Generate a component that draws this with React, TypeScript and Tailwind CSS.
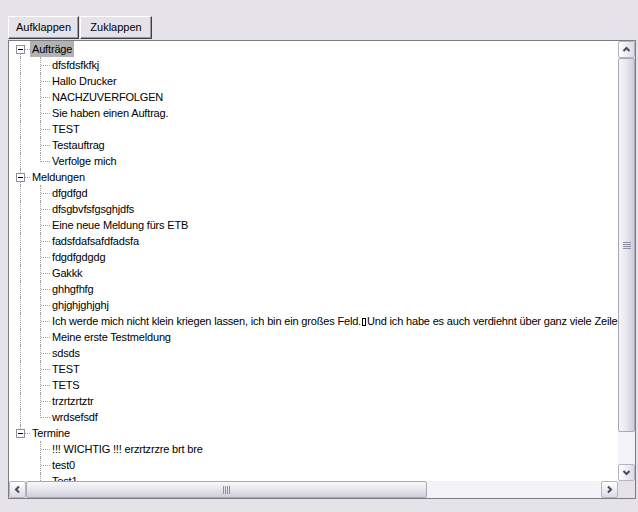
import type { ReactNode } from "react";

type Group = { title: string; items: ReactNode[]; selected?: boolean };

const groups: Group[] = [
  {
    title: "Aufträge",
    selected: true,
    items: ["dfsfdsfkfkj", "Hallo Drucker", "NACHZUVERFOLGEN", "Sie haben einen Auftrag.", "TEST", "Testauftrag", "Verfolge mich"],
  },
  {
    title: "Meldungen",
    items: [
      "dfgdfgd",
      "dfsgbvfsfgsghjdfs",
      "Eine neue Meldung fürs ETB",
      "fadsfdafsafdfadsfa",
      "fdgdfgdgdg",
      "Gakkk",
      "ghhgfhfg",
      "ghjghjghjghj",
      <>
        Ich werde mich nicht klein kriegen lassen, ich bin ein großes Feld.
        <span className="mx-[1px] inline-block h-[8px] w-[4px] border border-black align-[-1px]" />
        Und ich habe es auch verdiehnt über ganz viele Zeile
      </>,
      "Meine erste Testmeldung",
      "sdsds",
      "TEST",
      "TETS",
      "trzrtzrtztr",
      "wrdsefsdf",
    ],
  },
  {
    title: "Termine",
    items: ["!!! WICHTIG !!! erzrtzrzre brt bre", "test0", "Test1", "Test2"],
  },
];

const dot = "border-dotted border-[#a0a0a0]";

function RootRow({ title, first, last, selected }: { title: string; first: boolean; last: boolean; selected?: boolean }) {
  return (
    <div className="relative flex h-4 items-center pl-[21px] leading-4 whitespace-nowrap">
      {!first && <span className={`absolute left-[11px] top-0 h-[4px] border-l ${dot}`} />}
      {!last && <span className={`absolute left-[11px] top-[13px] bottom-0 border-l ${dot}`} />}
      <span className="absolute left-[7px] top-[4px] flex h-[9px] w-[9px] items-center justify-center border border-[#8e8e9e] bg-white">
        <span className="h-px w-[5px] bg-black" />
      </span>
      <span className={`absolute left-[16px] top-[8px] w-[5px] border-t ${dot}`} />
      <span className={`h-4 px-[2px] ${selected ? "bg-[#b2b2b2]" : ""}`}>{title}</span>
    </div>
  );
}

function ChildRow({ text, rootLast, lastChild }: { text: ReactNode; rootLast: boolean; lastChild: boolean }) {
  return (
    <div className="relative h-4 pl-[43px] leading-4 whitespace-nowrap">
      {!rootLast && <span className={`absolute left-[11px] top-0 bottom-0 border-l ${dot}`} />}
      <span className={`absolute left-[31px] top-0 border-l ${dot} ${lastChild ? "h-[9px]" : "bottom-0"}`} />
      <span className={`absolute left-[32px] top-[8px] w-[9px] border-t ${dot}`} />
      {text}
    </div>
  );
}

function Chevron({ rotate }: { rotate: string }) {
  return (
    <svg width="9" height="9" viewBox="0 0 9 9" className={rotate}>
      <path d="M1.5 6 L4.5 3 L7.5 6" fill="none" stroke="#4a4a5a" strokeWidth="2" />
    </svg>
  );
}

function SbButton({ rotate, grad }: { rotate: string; grad: string }) {
  return (
    <div className={`flex h-[17px] w-[17px] shrink-0 items-center justify-center rounded-[2px] border border-[#b4b4c4] ${grad}`}>
      <Chevron rotate={rotate} />
    </div>
  );
}

function Grip({ vertical }: { vertical: boolean }) {
  const bars = [0, 1, 2, 3];
  return (
    <div className={`flex ${vertical ? "flex-col" : "flex-row"} gap-[1px]`}>
      {bars.map((b) => (
        <span key={b} className={`${vertical ? "h-px w-[8px]" : "h-[8px] w-px"} bg-[#8e8ea4]`} />
      ))}
    </div>
  );
}

export default function App() {
  return (
    <div className="h-[512px] w-[638px] overflow-hidden bg-[#e6e2e9] text-[11px] text-black" style={{ fontFamily: '"Liberation Sans", Arial, sans-serif' }}>
      <div className="flex gap-[1px] pl-[8px] pt-[16px]">
        {["Aufklappen", "Zuklappen"].map((label, i) => (
          <button
            key={label}
            className={`h-[23px] ${i === 0 ? "w-[71px]" : "w-[72px]"} border border-t-white border-l-white border-r-[#404040] border-b-[#404040] bg-[#e6e2e9] shadow-[inset_-1px_-1px_0_#9a98a0]`}
          >
            {label}
          </button>
        ))}
      </div>

      <div className="ml-[8px] mt-px flex h-[459px] w-[628px] flex-col border border-[#7c7c84]">
        <div className="flex min-h-0 flex-1">
          <div className="min-w-0 flex-1 overflow-hidden bg-white tracking-[-0.17px]">
            {groups.map((g, gi) => {
              const rootLast = gi === groups.length - 1;
              return (
                <div key={g.title}>
                  <RootRow title={g.title} first={gi === 0} last={rootLast} selected={g.selected} />
                  {g.items.map((it, ii) => (
                    <ChildRow key={ii} text={it} rootLast={rootLast} lastChild={ii === g.items.length - 1} />
                  ))}
                </div>
              );
            })}
          </div>
          {/* vertical scrollbar */}
          <div className="flex w-[17px] shrink-0 flex-col bg-[#f3f2f6]">
            <SbButton rotate="" grad="bg-gradient-to-r from-white to-[#dcdae6]" />
            <div className="flex h-[374px] items-center justify-center rounded-[2px] border border-[#a8a8b8] bg-gradient-to-r from-[#f6f6fa] via-[#e6e6ee] to-[#cfcddc]">
              <Grip vertical />
            </div>
            <div className="flex-1" />
            <SbButton rotate="rotate-180" grad="bg-gradient-to-r from-white to-[#dcdae6]" />
          </div>
        </div>
        {/* horizontal scrollbar */}
        <div className="flex h-[17px] shrink-0">
          <div className="flex flex-1 bg-[#f3f2f6]">
            <SbButton rotate="-rotate-90" grad="bg-gradient-to-b from-white to-[#dcdae6]" />
            <div className="flex w-[401px] items-center justify-center rounded-[2px] border border-[#a8a8b8] bg-gradient-to-b from-[#f6f6fa] via-[#e6e6ee] to-[#cfcddc]">
              <Grip vertical={false} />
            </div>
            <div className="flex-1" />
            <SbButton rotate="rotate-90" grad="bg-gradient-to-b from-white to-[#dcdae6]" />
          </div>
          <div className="w-[17px] bg-[#e6e2e9]" />
        </div>
      </div>
    </div>
  );
}
